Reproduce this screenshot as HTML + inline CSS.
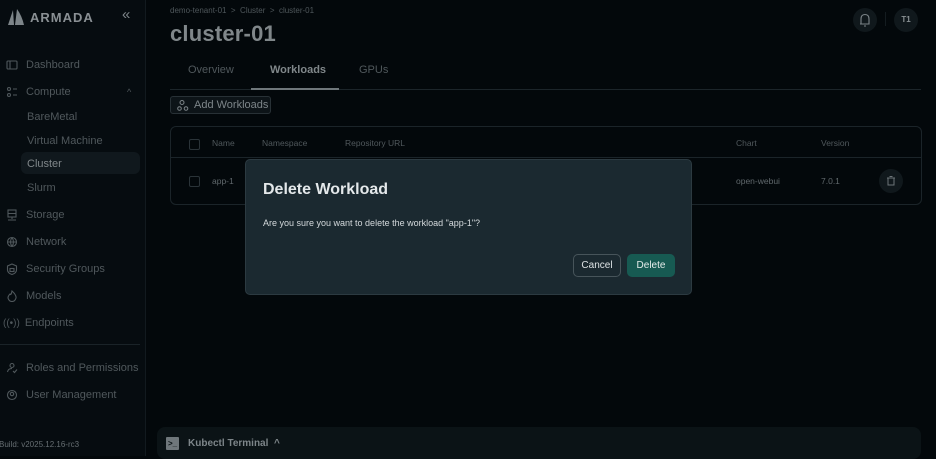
<!DOCTYPE html>
<html><head><meta charset="utf-8"><style>
*{box-sizing:border-box;margin:0;padding:0}
body{width:936px;height:456px;background:#03080b;font-family:"Liberation Sans",sans-serif;color:#7d8589;position:relative;overflow:hidden}
.sb{position:absolute;left:0;top:0;width:146px;height:456px;background:#060c10;border-right:1px solid #121a1f}
.logo{position:absolute;left:4px;top:8px;display:flex;align-items:center;gap:4px;color:#8a9094;font-weight:bold;font-size:13px;letter-spacing:1px}
.coll{position:absolute;left:122px;top:6px;font-size:15px;color:#7d8589}
.it{position:absolute;left:6px;font-size:11px;color:#50585c;display:flex;align-items:center;gap:8px}
.it svg{width:12px;height:12px;stroke:#50585c;fill:none;stroke-width:1.1}
.sub{position:absolute;left:27px;font-size:11px;color:#50585c}
.act{position:absolute;left:21px;top:152px;width:119px;height:22px;background:#10181d;border-radius:6px}
.hr{position:absolute;left:0;top:344px;width:140px;height:1px;background:#1a2328}
.bc{position:absolute;left:170px;top:6px;font-size:8px;color:#4f575b}
h1{position:absolute;left:170px;top:21px;font-size:22px;color:#80878a;font-weight:bold;letter-spacing:.2px}
.tab{position:absolute;top:64px;font-size:11px;color:#50585c}
.tline{position:absolute;left:170px;top:89px;width:751px;height:1px;background:#1c252a}
.tact{position:absolute;left:251px;top:88px;width:88px;height:2px;background:#6f777b}
.btn{position:absolute;left:170px;top:96px;width:101px;height:18px;border:1px solid #283136;border-radius:3px;background:#0d1418;font-size:11px;color:#7d8589;padding-left:23px;line-height:16px}
.tbl{position:absolute;left:170px;top:126px;width:752px;height:79px;border:1px solid #1b2429;border-radius:6px}
.th{position:absolute;font-size:8.5px;color:#50585c}
.cb{position:absolute;width:11px;height:11px;border:1px solid #2a3338;border-radius:2px}
.rl{position:absolute;left:0;top:30px;width:750px;height:1px;background:#1b2429}
.modal{position:absolute;left:245px;top:159px;width:447px;height:136px;background:#1b2930;border:1px solid #2c3a41;border-radius:5px}
.modal h2{position:absolute;left:17px;top:21px;font-size:16px;color:#e4e8ea;font-weight:bold}
.modal p{position:absolute;left:17px;top:58px;font-size:9px;color:#d4d9dc}
.cancel{position:absolute;left:327px;top:94px;width:48px;height:23px;border:1px solid #47545a;border-radius:5px;font-size:10px;color:#dde2e4;text-align:center;line-height:21px}
.del{position:absolute;left:381px;top:94px;width:48px;height:23px;background:#175a52;border-radius:5px;font-size:10px;color:#e4ecea;text-align:center;line-height:23px}
.kb{position:absolute;left:157px;top:427px;width:764px;height:32px;background:#0b1316;border-radius:8px}
.icb{position:absolute;width:24px;height:24px;border-radius:50%;background:#10181c}
</style></head><body>
<div class="sb">
<div class="logo"><svg width="22" height="18" viewBox="0 0 22 18"><path d="M4 17 L9 2 L10 17Z" fill="#7d8589"/><path d="M11 17 L13 1 Q18 8 20 17Z" fill="#7d8589"/></svg>ARMADA</div>
<div class="coll">«</div>
<div class="it" style="top:59px"><svg viewBox="0 0 12 12"><rect x="1" y="2" width="10" height="8" rx="1"/><path d="M4 2v8"/></svg>Dashboard</div>
<div class="it" style="top:86px"><svg viewBox="0 0 12 12"><circle cx="3" cy="3" r="1.5"/><circle cx="3" cy="9" r="1.5"/><path d="M7 3h4M7 9h4"/></svg>Compute</div>
<div style="position:absolute;left:127px;top:87px;font-size:9px;color:#50585c">^</div>
<div class="sub" style="top:111px">BareMetal</div>
<div class="sub" style="top:135px">Virtual Machine</div>
<div class="act"></div>
<div class="sub" style="top:158px;color:#80878a">Cluster</div>
<div class="sub" style="top:182px">Slurm</div>
<div class="it" style="top:209px"><svg viewBox="0 0 12 12"><rect x="2" y="1" width="8" height="7"/><path d="M2 4.5h8M6 8v2M2 11h8"/></svg>Storage</div>
<div class="it" style="top:236px"><svg viewBox="0 0 12 12"><circle cx="6" cy="6" r="4.5"/><path d="M1.5 6h9M6 1.5c-2 3-2 6 0 9M6 1.5c2 3 2 6 0 9"/></svg>Network</div>
<div class="it" style="top:263px"><svg viewBox="0 0 12 12"><path d="M6 1 L10.5 3 V7 Q10.5 10 6 11.5 Q1.5 10 1.5 7 V3Z"/><rect x="4" y="5.5" width="4" height="3"/></svg>Security Groups</div>
<div class="it" style="top:290px"><svg viewBox="0 0 12 12"><path d="M6 1 Q10.5 5 10 8 Q9 11.5 6 11.5 Q3 11.5 2 8 Q2 6 4 4 Q5 6 6 1Z"/></svg>Models</div>
<div class="it" style="top:317px;left:3px;gap:5px"><span style="font-size:10px">((•))</span>Endpoints</div>
<div class="hr"></div>
<div class="it" style="top:362px"><svg viewBox="0 0 12 12"><circle cx="6" cy="3.5" r="2"/><path d="M1.5 10 Q2 6.5 6 6.5M7 9l1.5 1.5L11 7.5"/></svg>Roles and Permissions</div>
<div class="it" style="top:389px"><svg viewBox="0 0 12 12"><circle cx="6" cy="6" r="4.5"/><circle cx="6" cy="5" r="1.7"/></svg>User Management</div>
<div style="position:absolute;left:-1px;top:440px;font-size:8px;color:#666e72">Build: v2025.12.16-rc3</div>
</div>
<div class="bc">demo-tenant-01 &nbsp;&gt;&nbsp; Cluster &nbsp;&gt;&nbsp; cluster-01</div>
<h1>cluster-01</h1>
<div class="icb" style="left:853px;top:8px"><svg width="24" height="24" viewBox="0 0 24 24"><path d="M8 16 V11 Q8 6.5 12 6.5 Q16 6.5 16 11 V16 H7M11 18h2" fill="none" stroke="#7d8589" stroke-width="1.1"/></svg></div>
<div style="position:absolute;left:885px;top:12px;width:1px;height:14px;background:#141c20"></div>
<div class="icb" style="left:894px;top:8px;font-size:8px;color:#8a9194;font-weight:bold;text-align:center;line-height:24px">T1</div>
<div class="tab" style="left:188px">Overview</div>
<div class="tab" style="left:270px;color:#80878a;font-weight:bold">Workloads</div>
<div class="tab" style="left:359px">GPUs</div>
<div class="tline"></div><div class="tact"></div>
<div class="btn"><svg style="position:absolute;left:6px;top:3px" width="12" height="11" viewBox="0 0 12 11"><circle cx="5" cy="2.5" r="2" fill="none" stroke="#7d8589"/><circle cx="2.5" cy="8.5" r="1.8" fill="none" stroke="#7d8589"/><circle cx="9" cy="8.5" r="1.8" fill="none" stroke="#7d8589"/></svg>Add Workloads</div>
<div class="tbl">
<div class="cb" style="left:18px;top:12px"></div><div class="th" style="left:41px;top:11px">Name</div>
<div class="th" style="left:91px;top:11px">Namespace</div><div class="th" style="left:174px;top:11px">Repository URL</div>
<div class="th" style="left:565px;top:11px">Chart</div><div class="th" style="left:650px;top:11px">Version</div>
<div class="rl"></div>
<div class="cb" style="left:18px;top:49px"></div><div class="th" style="left:41px;top:49px;color:#60686c">app-1</div>
<div class="th" style="left:565px;top:49px;color:#60686c">open-webui</div><div class="th" style="left:650px;top:49px;color:#60686c">7.0.1</div>
<div class="icb" style="left:708px;top:42px"><svg width="24" height="24" viewBox="0 0 24 24"><path d="M9 9h6v7H9zM8 9h8M10.5 7.5h3" fill="none" stroke="#6d7579"/></svg></div>
</div>
<div class="modal">
<h2>Delete Workload</h2>
<p>Are you sure you want to delete the workload "app-1"?</p>
<div class="cancel">Cancel</div><div class="del">Delete</div>
</div>
<div class="kb"><div style="position:absolute;left:9px;top:10px;width:13px;height:13px;background:#6f777b;border-radius:1px;font-size:8px;color:#0b1316;line-height:13px;text-align:center;font-weight:bold">&gt;_</div>
<div style="position:absolute;left:31px;top:11px;font-size:10px;font-weight:bold;color:#7d8589">Kubectl Terminal &nbsp;^</div></div>
</body></html>
